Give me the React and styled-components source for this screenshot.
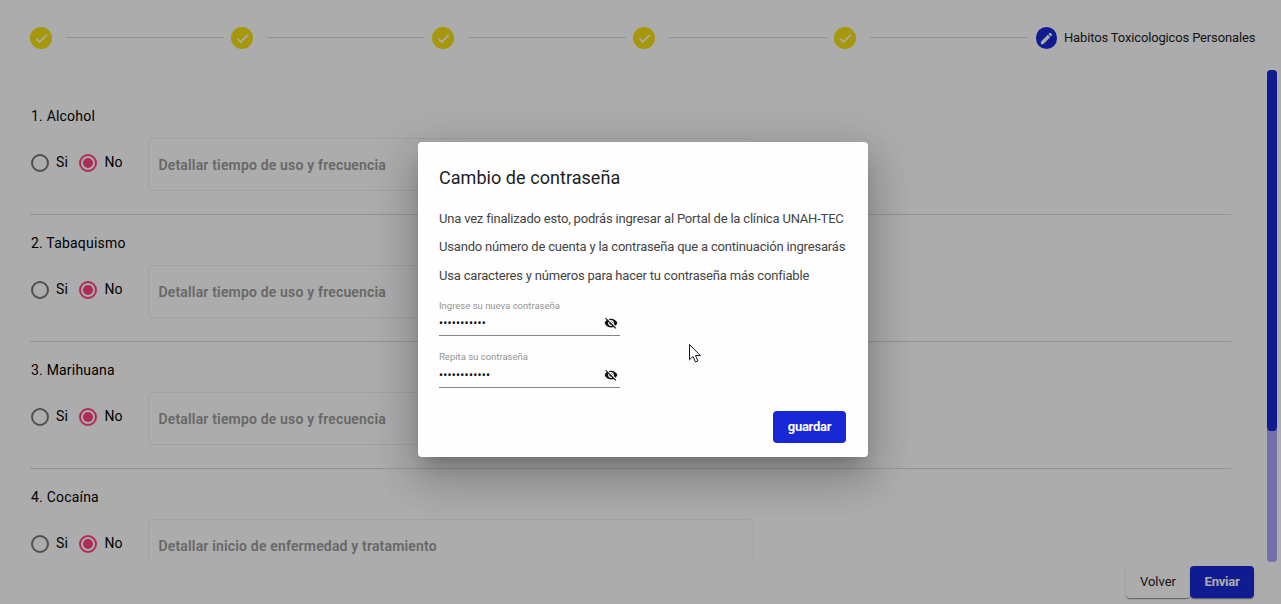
import React from "react";
import styled, { createGlobalStyle } from "styled-components";

const Global = createGlobalStyle`
  * { box-sizing: border-box; }
  body { margin: 0; background: #fefefe; font-family: Roboto, "Liberation Sans", sans-serif; overflow: hidden; }
`;

const Page = styled.div`
  position: relative;
  width: 1281px;
  height: 604px;
  overflow: hidden;
  display: flex;
  flex-direction: column;
`;

const Stepper = styled.header`
  height: 70px;
  padding: 6px 26px 0 30px;
  display: flex;
  align-items: center;
  flex: none;
`;

const StepIcon = styled.span`
  width: ${(p) => (p.$active ? 21 : 22)}px;
  height: 22px;
  flex: none;
  margin-left: ${(p) => (p.$active ? 1 : 0)}px;
  border-radius: 11px;
  display: flex;
  align-items: center;
  justify-content: center;
  background: ${(p) => (p.$active ? "#1828d7" : "#f5df13")};
  svg { width: 15px; height: 15px; fill: #fff; }
`;

const StepLine = styled.span`
  flex: 1;
  height: 1px;
  margin: 0 7px 1px 14px;
  background: #d8d8d8;
`;

const StepLabel = styled.span`
  width: 191px;
  margin-left: 7px;
  font-size: 13px;
  line-height: 20px;
  letter-spacing: -0.15px;
  white-space: nowrap;
  color: #1c1c1c;
`;

const Body = styled.main`
  display: flex;
  height: 492px;
  flex: none;
  padding-right: 4px;
`;

const Questions = styled.div`
  flex: 1;
  overflow: hidden;
  padding: 18px 36px 0 30px;
`;

const Track = styled.div`
  width: 10px;
  border-radius: 4px;
  background: #aba3ff;
`;

const Thumb = styled.div`
  height: 361px;
  border-radius: 4px;
  background: #1828d7;
`;

const Question = styled.section`
  height: 127px;
  padding-top: 18px;
  border-bottom: 1px solid #d9d9d9;
`;

const QuestionTitle = styled.h4`
  margin: 0 0 12px 1px;
  font-size: 14px;
  font-weight: 400;
  line-height: 20px;
  letter-spacing: 0.2px;
  color: #000;
`;

const Answer = styled.div`
  display: flex;
  align-items: flex-start;
  padding-left: 1px;
`;

const RadioLabel = styled.label`
  width: ${(p) => p.$w}px;
  flex: none;
  display: flex;
  align-items: center;
  gap: ${(p) => p.$gap}px;
  margin-top: 15px;
  font-size: 14px;
  line-height: 20px;
  letter-spacing: 0.1px;
  color: #000;
  span { margin-top: -2px; }
`;

const Radio = styled.i`
  width: 18px;
  height: 18px;
  flex: none;
  margin-top: 1px;
  border: 2px solid ${(p) => (p.$on ? "#ff4081" : "#757575")};
  border-radius: 50%;
  display: flex;
  align-items: center;
  justify-content: center;
  &::after {
    content: "";
    width: 10px;
    height: 10px;
    border-radius: 50%;
    background: ${(p) => (p.$on ? "#ff4081" : "transparent")};
  }
`;

const Detail = styled.div`
  width: 606px;
  height: 53px;
  padding: 1px 9.5px 0;
  border: 1px solid #ebefef;
  border-radius: 5px;
  font-size: 14px;
  font-weight: 600;
  line-height: 50px;
  letter-spacing: 0.17px;
  color: #999;
`;

const Footer = styled.footer`
  display: flex;
  justify-content: flex-end;
  padding: 4px 27px 0 0;
`;

const Button = styled.button`
  width: ${(p) => p.$w}px;
  height: 32px;
  padding: 0;
  border: 0;
  border-radius: 4px;
  font: ${(p) => (p.$primary ? 700 : 400)} 13px/32px Roboto, sans-serif;
  letter-spacing: ${(p) => (p.$primary ? -0.25 : 0)}px;
  color: ${(p) => (p.$primary ? "#fff" : "#222")};
  background: ${(p) => (p.$primary ? "#1828d7" : "#fefefe")};
  box-shadow: ${(p) => (p.$flat ? "none" : "0 2px 1px -1px rgba(0,0,0,.3), 0 1px 2px rgba(0,0,0,.24)")};
`;

const Overlay = styled.div`
  position: absolute;
  inset: 0;
  display: flex;
  align-items: center;
  justify-content: center;
  padding: 0 0 5px 5px;
  background: rgba(0, 0, 0, 0.32);
`;

const Dialog = styled.div`
  width: 450px;
  height: 315px;
  padding: 24px 22px 14px 21px;
  display: flex;
  flex-direction: column;
  border-radius: 4px;
  background: #fefefe;
  box-shadow: 0 11px 15px -7px rgba(0,0,0,.2), 0 24px 38px 3px rgba(0,0,0,.14), 0 9px 46px 8px rgba(0,0,0,.12);
`;

const Title = styled.h2`
  margin: 0 0 14.6px;
  font-size: 18px;
  font-weight: 400;
  line-height: 24px;
  letter-spacing: 0.05px;
  color: #1d1d1f;
`;

const Line = styled.p`
  margin: 0 0 0.5px;
  height: 28px;
  font-size: 13px;
  line-height: 28px;
  letter-spacing: -0.19px;
  white-space: nowrap;
  color: #444;
`;

const Field = styled.div`
  width: 181px;
  height: ${(p) => p.$h}px;
  margin-top: ${(p) => p.$top}px;
  display: flex;
  flex-direction: column;
  justify-content: space-between;
  border-bottom: 1px solid #858585;
`;

const FieldLabel = styled.div`
  font-size: 9.5px;
  line-height: 13px;
  color: #949494;
`;

const FieldValue = styled.div`
  display: flex;
  align-items: center;
  justify-content: space-between;
  height: 23px;
  padding-right: 2px;
  svg { width: 14px; height: 14px; fill: #111; }
`;

const Dots = styled.span`
  font-size: 12px;
  line-height: 16px;
  letter-spacing: 0.22px;
  color: #111;
`;

const Actions = styled.div`
  display: flex;
  justify-content: flex-end;
  margin-top: auto;
`;

const Pointer = styled.svg`
  position: absolute;
  left: 688px;
  top: 343px;
  width: 14px;
  height: 21px;
`;

const Check = () => (
  <svg viewBox="0 0 24 24"><path d="M9 16.17L4.83 12l-1.42 1.41L9 19 21 7l-1.41-1.41z" stroke="#fff" strokeWidth="0.8" /></svg>
);
const Pencil = () => (
  <svg viewBox="0 0 24 24"><path d="M3 17.25V21h3.75L17.81 9.94l-3.75-3.75L3 17.25zM20.71 7.04c.39-.39.39-1.02 0-1.41l-2.34-2.34c-.39-.39-1.02-.39-1.41 0l-1.83 1.83 3.75 3.75 1.83-1.83z" /></svg>
);
const EyeOff = () => (
  <svg viewBox="0 0 24 24"><path d="M12 7c2.76 0 5 2.24 5 5 0 .65-.13 1.26-.36 1.83l2.92 2.92c1.51-1.26 2.7-2.89 3.43-4.75-1.73-4.39-6-7.5-11-7.5-1.4 0-2.74.25-3.98.7l2.16 2.16C10.74 7.13 11.35 7 12 7zM2 4.27l2.28 2.28.46.46C3.08 8.3 1.78 10.02 1 12c1.73 4.39 6 7.5 11 7.5 1.55 0 3.03-.3 4.38-.84l.42.42L19.73 22 21 20.73 3.27 3 2 4.27zM7.53 9.8l1.55 1.55c-.05.21-.08.43-.08.65 0 1.66 1.34 3 3 3 .22 0 .44-.03.65-.08l1.55 1.55c-.67.33-1.41.53-2.2.53-2.76 0-5-2.24-5-5 0-.79.2-1.53.53-2.2zm4.31-.78l3.15 3.15.02-.16c0-1.66-1.34-3-3-3l-.17.01z" /></svg>
);

const use = "Detallar tiempo de uso y frecuencia";
const questions = [
  ["1. Alcohol", use],
  ["2. Tabaquismo", use],
  ["3. Marihuana", use],
  ["4. Cocaína", "Detallar inicio de enfermedad y tratamiento"],
];

export default function App() {
  return (
    <Page>
      <Global />
      <Stepper>
        {[0, 1, 2, 3, 4].map((n) => (
          <React.Fragment key={n}>
            <StepIcon><Check /></StepIcon>
            <StepLine />
          </React.Fragment>
        ))}
        <StepIcon $active><Pencil /></StepIcon>
        <StepLabel>Habitos Toxicologicos Personales</StepLabel>
      </Stepper>
      <Body>
        <Questions>
          {questions.map(([title, hint]) => (
            <Question key={title}>
              <QuestionTitle>{title}</QuestionTitle>
              <Answer>
                <RadioLabel $w={48} $gap={7}><Radio /><span>Si</span></RadioLabel>
                <RadioLabel $w={69} $gap={7.5}><Radio $on /><span>No</span></RadioLabel>
                <Detail>{hint}</Detail>
              </Answer>
            </Question>
          ))}
        </Questions>
        <Track><Thumb /></Track>
      </Body>
      <Footer>
        <Button $w={64}>Volver</Button>
        <Button $w={64} $primary>Enviar</Button>
      </Footer>
      <Overlay>
        <Dialog>
          <Title>Cambio de contraseña</Title>
          <Line>Una vez finalizado esto, podrás ingresar al Portal de la clínica UNAH-TEC</Line>
          <Line>Usando número de cuenta y la contraseña que a continuación ingresarás</Line>
          <Line>Usa caracteres y números para hacer tu contraseña más confiable</Line>
          <Field $top={8.9} $h={37}>
            <FieldLabel>Ingrese su nueva contraseña</FieldLabel>
            <FieldValue><Dots>{"•".repeat(11)}</Dots><EyeOff /></FieldValue>
          </Field>
          <Field $top={14} $h={38}>
            <FieldLabel>Repita su contraseña</FieldLabel>
            <FieldValue><Dots>{"•".repeat(12)}</Dots><EyeOff /></FieldValue>
          </Field>
          <Actions><Button $w={73} $primary $flat>guardar</Button></Actions>
        </Dialog>
      </Overlay>
      <Pointer viewBox="0 0 14 21">
        <path d="M1.5 1.5v15.2l3.5-3.3 2.4 5.6 2.5-1.1-2.4-5.4h4.8z" fill="#fff" stroke="#111827" strokeWidth="1" />
      </Pointer>
    </Page>
  );
}
